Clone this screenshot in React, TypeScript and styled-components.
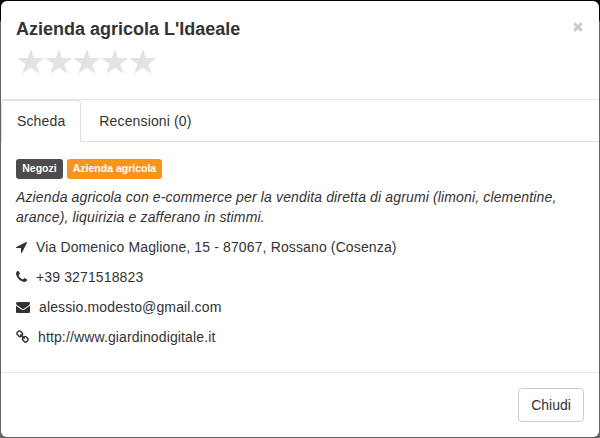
import React from "react";
import styled, { createGlobalStyle } from "styled-components";

const GlobalStyle = createGlobalStyle`
  * { box-sizing: border-box; }
  html, body { margin: 0; padding: 0; overflow: hidden; }
  body {
    font-family: "Liberation Sans", Helvetica, Arial, sans-serif;
    font-size: 14px;
    line-height: 20px;
    color: #333;
  }
`;

const Backdrop = styled.div`
  height: 438px;
  padding: 1px;
  background: linear-gradient(#05050a 0 21px, #666 21px);
`;

const Modal = styled.div`
  display: flex;
  flex-direction: column;
  height: 436px;
  background: #fff;
  border-radius: 6px;
`;

const Header = styled.header`
  display: flex;
  justify-content: space-between;
  align-items: flex-start;
  height: 99px;
  padding: 15px;
  border-bottom: 1px solid #e5e5e5;
`;

const Title = styled.h4`
  margin: 0;
  font-size: 18px;
  line-height: 26px;
  font-weight: 700;
`;

const Stars = styled.div`
  display: flex;
  margin-top: 6px;
  padding-left: 1px;
`;

const StarIcon = styled.svg`
  width: 28px;
  height: 27px;
  fill: #e3e3e3;
`;

const CloseButton = styled.button`
  margin: 0;
  padding: 3px 1px 0 0;
  border: 0;
  background: none;
  line-height: 0;
`;

const CloseIcon = styled.svg`
  width: 10px;
  height: 16px;
  stroke: #c9c9c9;
  stroke-width: 3;
`;

const Tabs = styled.nav`
  display: flex;
  height: 42px;
  border-bottom: 1px solid #ddd;
`;

const Tab = styled.a<{ $active?: boolean }>`
  height: 42px;
  margin-right: 2px;
  padding: 10px 15px;
  border: 1px solid ${(p) => (p.$active ? "#ddd" : "transparent")};
  border-bottom-color: ${(p) => (p.$active ? "#fff" : "transparent")};
  border-radius: 4px 4px 0 0;
  letter-spacing: 0.14px;
`;

const Body = styled.section`
  flex: 1;
  padding: 17px 15px 0;
`;

const Labels = styled.div`
  display: flex;
  gap: 4px;
  height: 20px;
`;

const Label = styled.span<{ $color: string; $width: number }>`
  width: ${(p) => p.$width}px;
  height: 20px;
  border-radius: 3px;
  background: ${(p) => p.$color};
  color: #fff;
  font-size: 10.5px;
  line-height: 19px;
  font-weight: 700;
  text-align: center;
  white-space: nowrap;
`;

const Description = styled.p`
  margin: 8px 0 10px;
  font-style: italic;
  letter-spacing: 0.142px;
`;

const Contact = styled.p`
  display: flex;
  align-items: center;
  gap: 9px;
  margin: 0 0 10px;
  letter-spacing: 0.13px;
`;

const ContactIcon = styled.svg`
  height: 14px;
  fill: #333;
`;

const Footer = styled.footer`
  display: flex;
  justify-content: flex-end;
  height: 65px;
  padding: 15px;
  border-top: 1px solid #e5e5e5;
`;

const Button = styled.button`
  height: 34px;
  width: 66px;
  padding: 0;
  border: 1px solid #ccc;
  border-radius: 4px;
  background: #fff;
  color: #333;
  font: inherit;
`;

const contacts = [
  {
    text: "Via Domenico Maglione, 15 - 87067, Rossano (Cosenza)",
    width: 11,
    viewBox: "192 0 1408 1792",
    path: "M1593 349l-640 1280q-17 35-57 35-5 0-15-2-22-5-35.5-22.5t-13.5-39.5v-576h-576q-22 0-39.5-13.5t-22.5-35.5 4-42 29-30l1280-640q13-7 29-7 27 0 45 19 15 14 18.5 34.5t-6.5 39.5z",
  },
  {
    text: "+39 3271518823",
    width: 11,
    viewBox: "192 0 1408 1792",
    path: "M1600 1240q0 27-10 70.5t-21 68.5q-21 50-122 106-94 51-186 51-27 0-52.5-3.5t-57.5-12.5-47.5-14.5-55.5-20.5-49-18q-98-35-175-83-128-79-264.5-215.5t-215.5-264.5q-48-77-83-175-3-9-18-49t-20.5-55.5-14.5-47.5-12.5-57.5-3.5-52.5q0-92 51-186 56-101 106-122 25-11 68.5-21t70.5-10q14 0 21 3 18 6 53 76 11 19 30 54t35 63.5 31 53.5q3 4 17.5 25t21.5 35.5 7 28.5q0 20-28.5 50t-62 55-62 53-28.5 46q0 9 5 22.5t8.5 20.5 14 24 11.5 19q76 137 174 235t235 174q2 1 19 11.5t24 14 20.5 8.5 22.5 5q18 0 46-28.5t53-62 55-62 50-28.5q14 0 28.5 7t35.5 21.5 25 17.5q25 15 53.5 31t63.5 35 54 30q70 35 76 53 3 7 3 21z",
  },
  {
    text: "alessio.modesto@gmail.com",
    width: 14,
    viewBox: "0 0 1792 1792",
    path: "M1792 710v794q0 66-47 113t-113 47h-1472q-66 0-113-47t-47-113v-794q44 49 101 87 362 246 497 345 57 42 92.5 65.5t94.5 48 110 24.5h2q51 0 110-24.5t94.5-48 92.5-65.5q170-123 498-345 57-39 100-87zm0-294q0 79-49 151t-122 123q-376 261-468 325-10 7-42.5 31t-54 38.5-52 32.5-57.5 27-50 9h-2q-23 0-50-9t-57.5-27-52-32.5-54-38.5-42.5-31q-91-64-262-182.5t-205-142.5q-62-42-117-115.5t-55-136.5q0-78 41.5-130t118.5-52h1472q65 0 112.5 47t47.5 113z",
  },
  {
    text: "http://www.giardinodigitale.it",
    width: 13,
    viewBox: "64 0 1664 1792",
    path: "M1520 1216q0-40-28-68l-208-208q-28-28-68-28-42 0-72 32 3 3 19 18.5t21.5 21.5 15 19 13 25.5 3.5 27.5q0 40-28 68t-68 28q-15 0-27.5-3.5t-25.5-13-19-15-21.5-21.5-18.5-19q-33 31-33 73 0 40 28 68l206 207q27 27 68 27 40 0 68-26l147-146q28-28 28-67zm-703-705q0-40-28-68l-206-207q-28-28-68-28-39 0-68 27l-147 146q-28 28-28 67 0 40 28 68l208 208q27 27 68 27 42 0 72-31-3-3-19-18.5t-21.5-21.5-15-19-13-25.5-3.5-27.5q0-40 28-68t68-28q15 0 27.5 3.5t25.5 13 19 15 21.5 21.5 18.5 19q33-31 33-73zm895 705q0 120-85 203l-147 146q-83 83-203 83-121 0-204-85l-206-207q-83-83-83-203 0-123 88-209l-88-88q-86 88-208 88-120 0-204-84l-208-208q-84-84-84-204t85-203l147-146q83-83 203-83 121 0 204 85l206 207q83 83 83 203 0 123-88 209l88 88q86-88 208-88 120 0 204 84l208 208q84 84 84 204z",
  },
];

export default function App() {
  return (
    <>
      <GlobalStyle />
      <Backdrop>
        <Modal role="dialog">
          <Header>
            <div>
              <Title>Azienda agricola L'Idaeale</Title>
              <Stars>
                {[0, 1, 2, 3, 4].map((i) => (
                  <StarIcon key={i} viewBox="0 0 28 27">
                    <path d="M13.9 0.8L17.2 10H27.7L19.3 16L22.5 25.8L13.9 19.8L5.3 25.8L8.5 16L0.1 10H10.6Z" />
                  </StarIcon>
                ))}
              </Stars>
            </div>
            <CloseButton aria-label="Chiudi">
              <CloseIcon viewBox="0 0 10 16">
                <path d="M1.3 4.3L8.7 11.7M8.7 4.3L1.3 11.7" />
              </CloseIcon>
            </CloseButton>
          </Header>
          <Tabs>
            <Tab $active>Scheda</Tab>
            <Tab>Recensioni (0)</Tab>
          </Tabs>
          <Body>
            <Labels>
              <Label $color="#4c4c4c" $width={47}>Negozi</Label>
              <Label $color="#f7941e" $width={95}>Azienda agricola</Label>
            </Labels>
            <Description>
              Azienda agricola con e-commerce per la vendita diretta di agrumi (limoni, clementine,
              arance), liquirizia e zafferano in stimmi.
            </Description>
            {contacts.map((c) => (
              <Contact key={c.text}>
                <ContactIcon viewBox={c.viewBox} width={c.width}>
                  <path d={c.path} />
                </ContactIcon>
                <span>{c.text}</span>
              </Contact>
            ))}
          </Body>
          <Footer>
            <Button>Chiudi</Button>
          </Footer>
        </Modal>
      </Backdrop>
    </>
  );
}
